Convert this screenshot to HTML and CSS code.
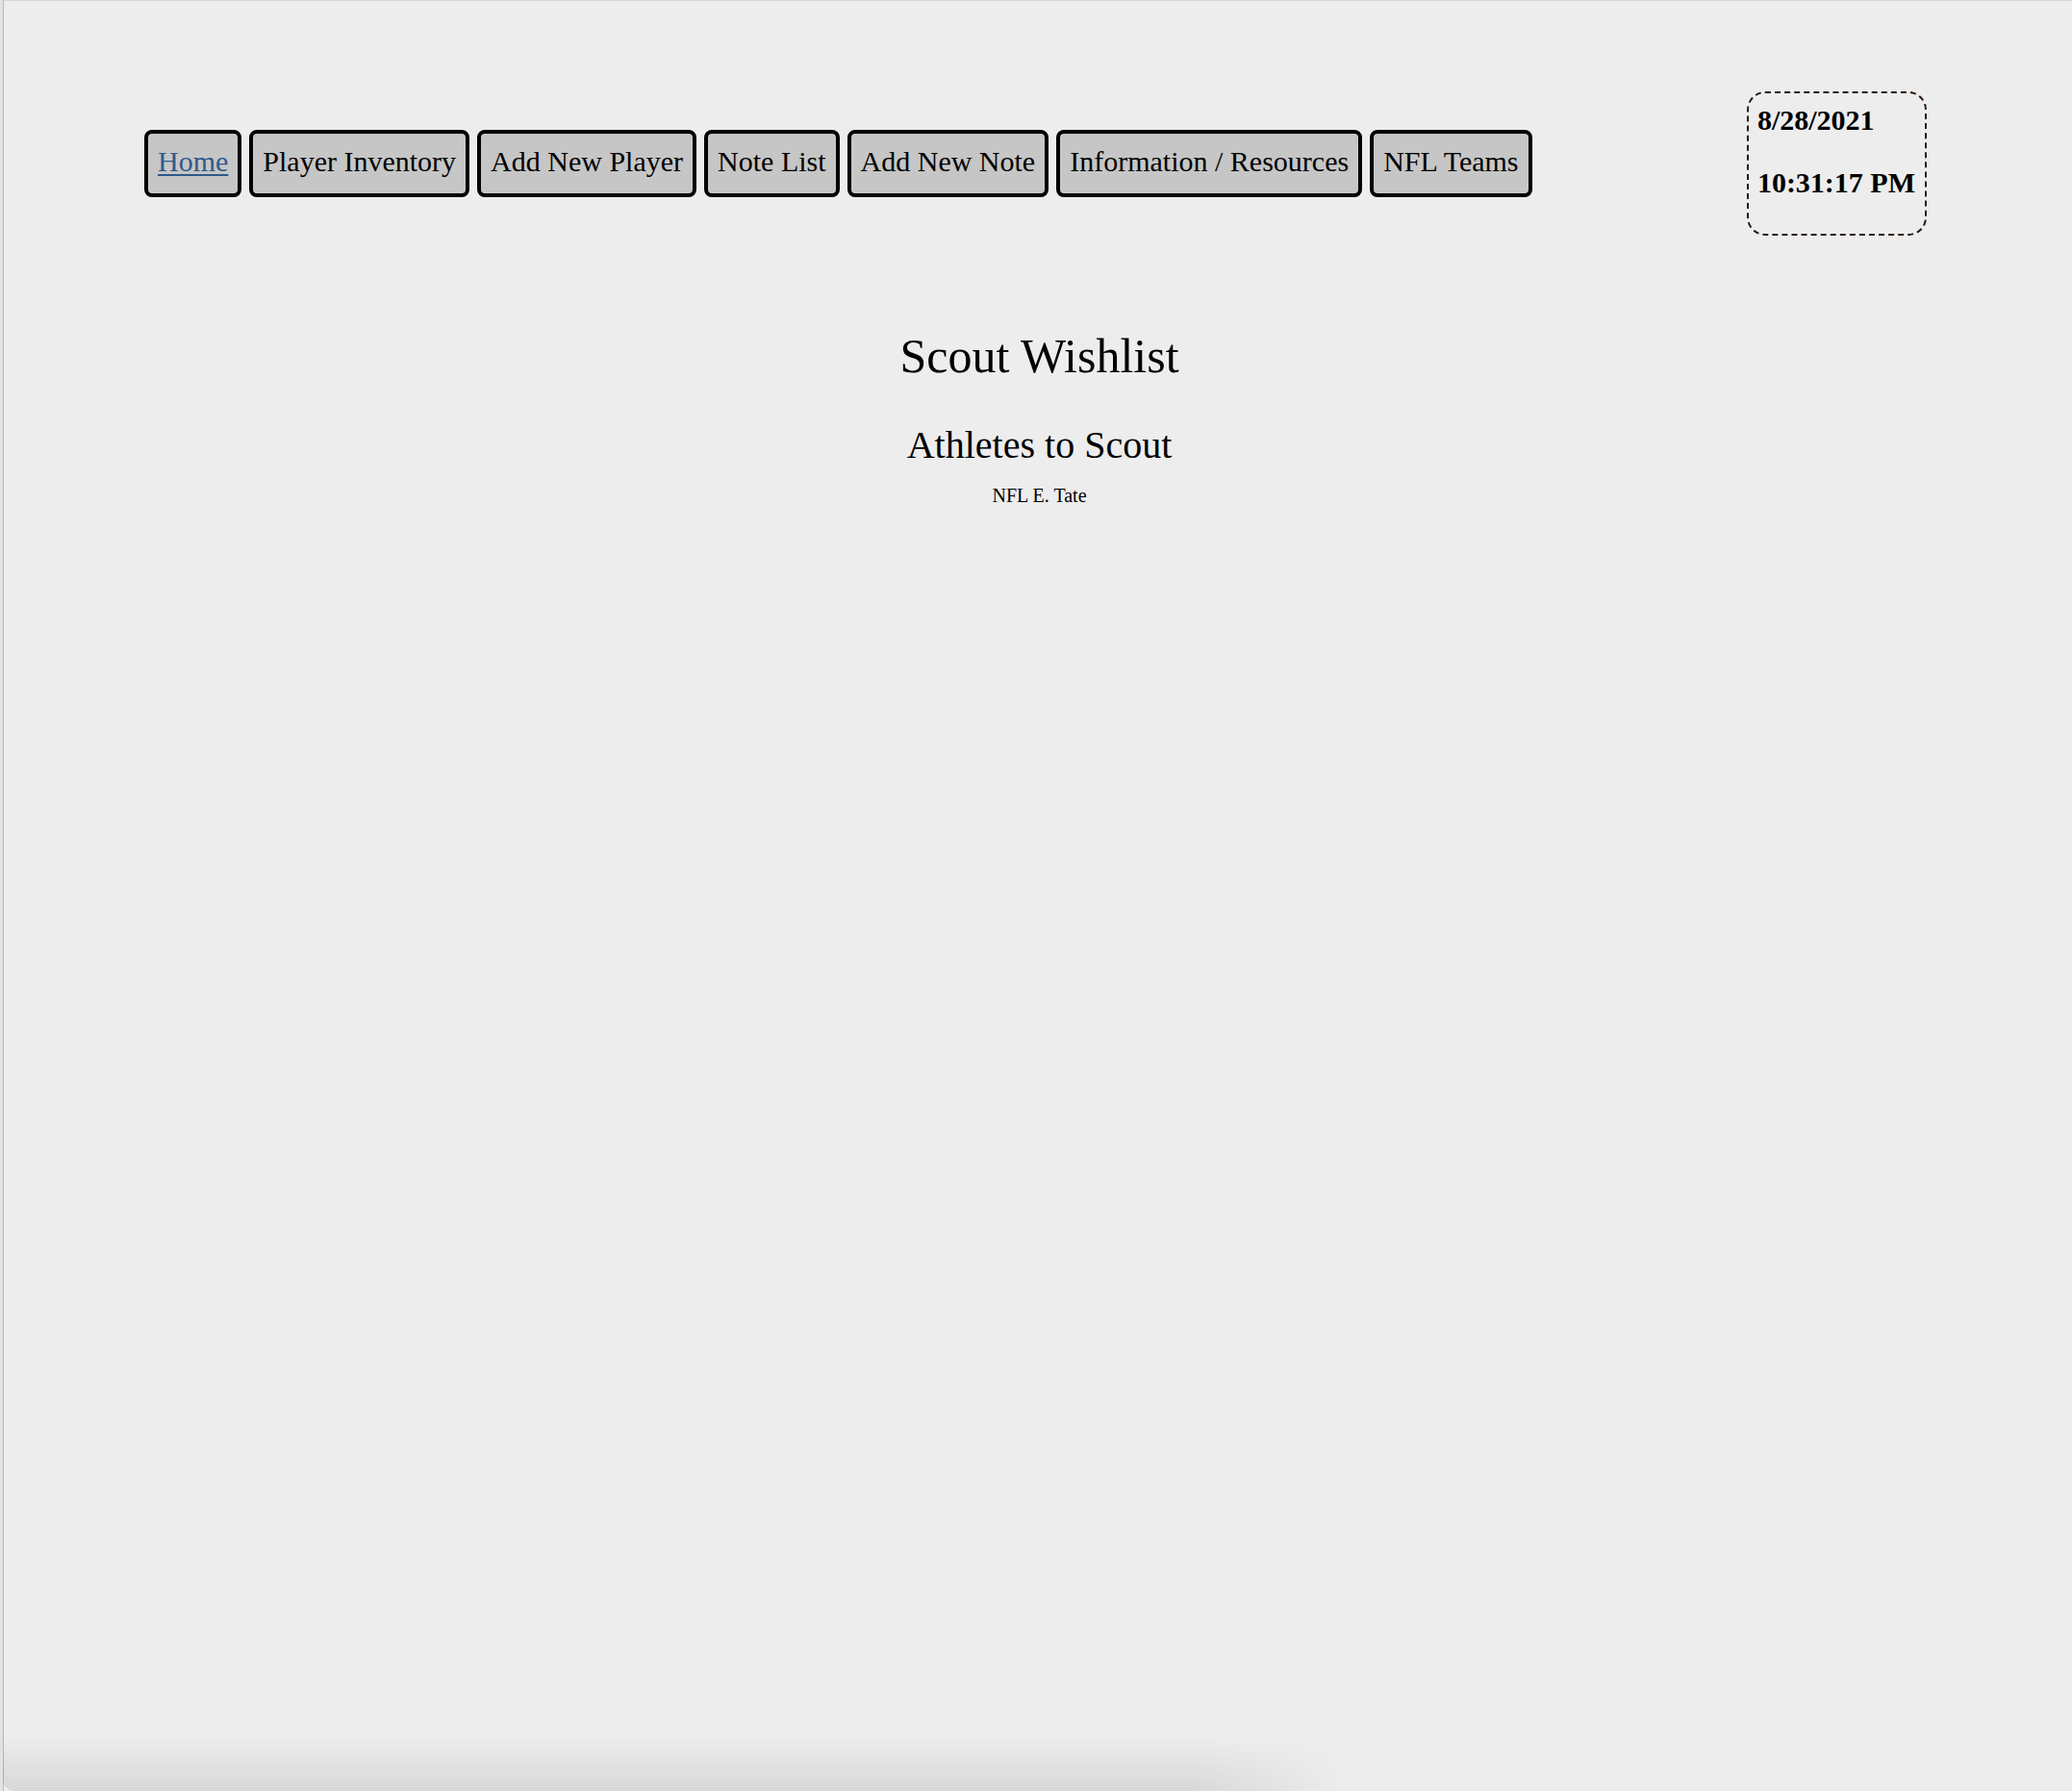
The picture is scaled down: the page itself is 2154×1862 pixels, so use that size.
FILE: index.html
```html
<!DOCTYPE html>
<html lang="en">
<head>
<meta charset="utf-8">
<title>Scout Wishlist</title>
<link rel="stylesheet" href="styles.css">
</head>
<body>
<div class="window">
  <header class="topbar">
    <nav class="tabs">
      <a class="tab tab-active" href="#">Home</a>
      <a class="tab" href="#">Player Inventory</a>
      <a class="tab" href="#">Add New Player</a>
      <a class="tab" href="#">Note List</a>
      <a class="tab" href="#">Add New Note</a>
      <a class="tab" href="#">Information / Resources</a>
      <a class="tab" href="#">NFL Teams</a>
    </nav>
    <div class="clock">
      <p class="clock-line">8/28/2021</p>
      <p class="clock-line clock-time">10:31:17 PM</p>
    </div>
  </header>
  <main class="content">
    <h1 class="title">Scout Wishlist</h1>
    <h2 class="subtitle">Athletes to Scout</h2>
    <p class="athlete">NFL E. Tate</p>
  </main>
  <div class="window-shade"></div>
</div>
</body>
</html>
```

FILE: styles.css
```css
html, body {
  margin: 0;
  padding: 0;
  background: #ededed;
}

body {
  font-family: "Liberation Serif", "Times New Roman", serif;
  color: #000;
  min-height: 1862px;
}

.window {
  min-height: 1862px;
  box-sizing: border-box;
  border-top: 1px solid #d4d4d8;
  border-left: 3px solid #e2e2e2;
  box-shadow: inset 1px 0 0 #b8b8b8;
  position: relative;
  overflow: hidden;
}

.topbar {
  display: flex;
  justify-content: space-between;
  align-items: center;
  padding: 94px 151px 0 147px;
}

.tabs {
  display: flex;
  gap: 8px;
}

.tab {
  display: block;
  background: #c6c6c6;
  border: 4px solid #000;
  border-radius: 8px;
  padding: 12px 10px 16px;
  font-size: 30px;
  line-height: 34px;
  color: #000;
  text-decoration: none;
  white-space: nowrap;
}

.tab-active {
  color: #2f5a8b;
  text-decoration: underline;
  text-decoration-thickness: 2px;
  text-underline-offset: 3px;
}

.clock {
  border: 2px dashed #2b1a0e;
  border-radius: 19px;
  padding: 11px 10px 36px 9px;
}

.clock-line {
  margin: 0;
  font-size: 30px;
  line-height: 34px;
  font-weight: bold;
  white-space: nowrap;
}

.clock-time {
  margin-top: 31px;
}

.content {
  text-align: center;
  padding-left: 4px;
}

.title {
  margin: 97px 0 0;
  font-size: 50px;
  line-height: 57px;
  font-weight: normal;
}

.subtitle {
  margin: 41px 0 0;
  font-size: 40px;
  line-height: 46px;
  font-weight: normal;
}

.athlete {
  margin: 18px 0 0;
  font-size: 20px;
  line-height: 23px;
}

.window-shade {
  position: absolute;
  left: 0;
  bottom: 0;
  width: 1400px;
  height: 56px;
  background: linear-gradient(to bottom, rgba(0,0,0,0), rgba(0,0,0,0.09));
  -webkit-mask-image: linear-gradient(to right, #000 88%, transparent);
  mask-image: linear-gradient(to right, #000 88%, transparent);
  border-bottom-left-radius: 12px;
}
```
